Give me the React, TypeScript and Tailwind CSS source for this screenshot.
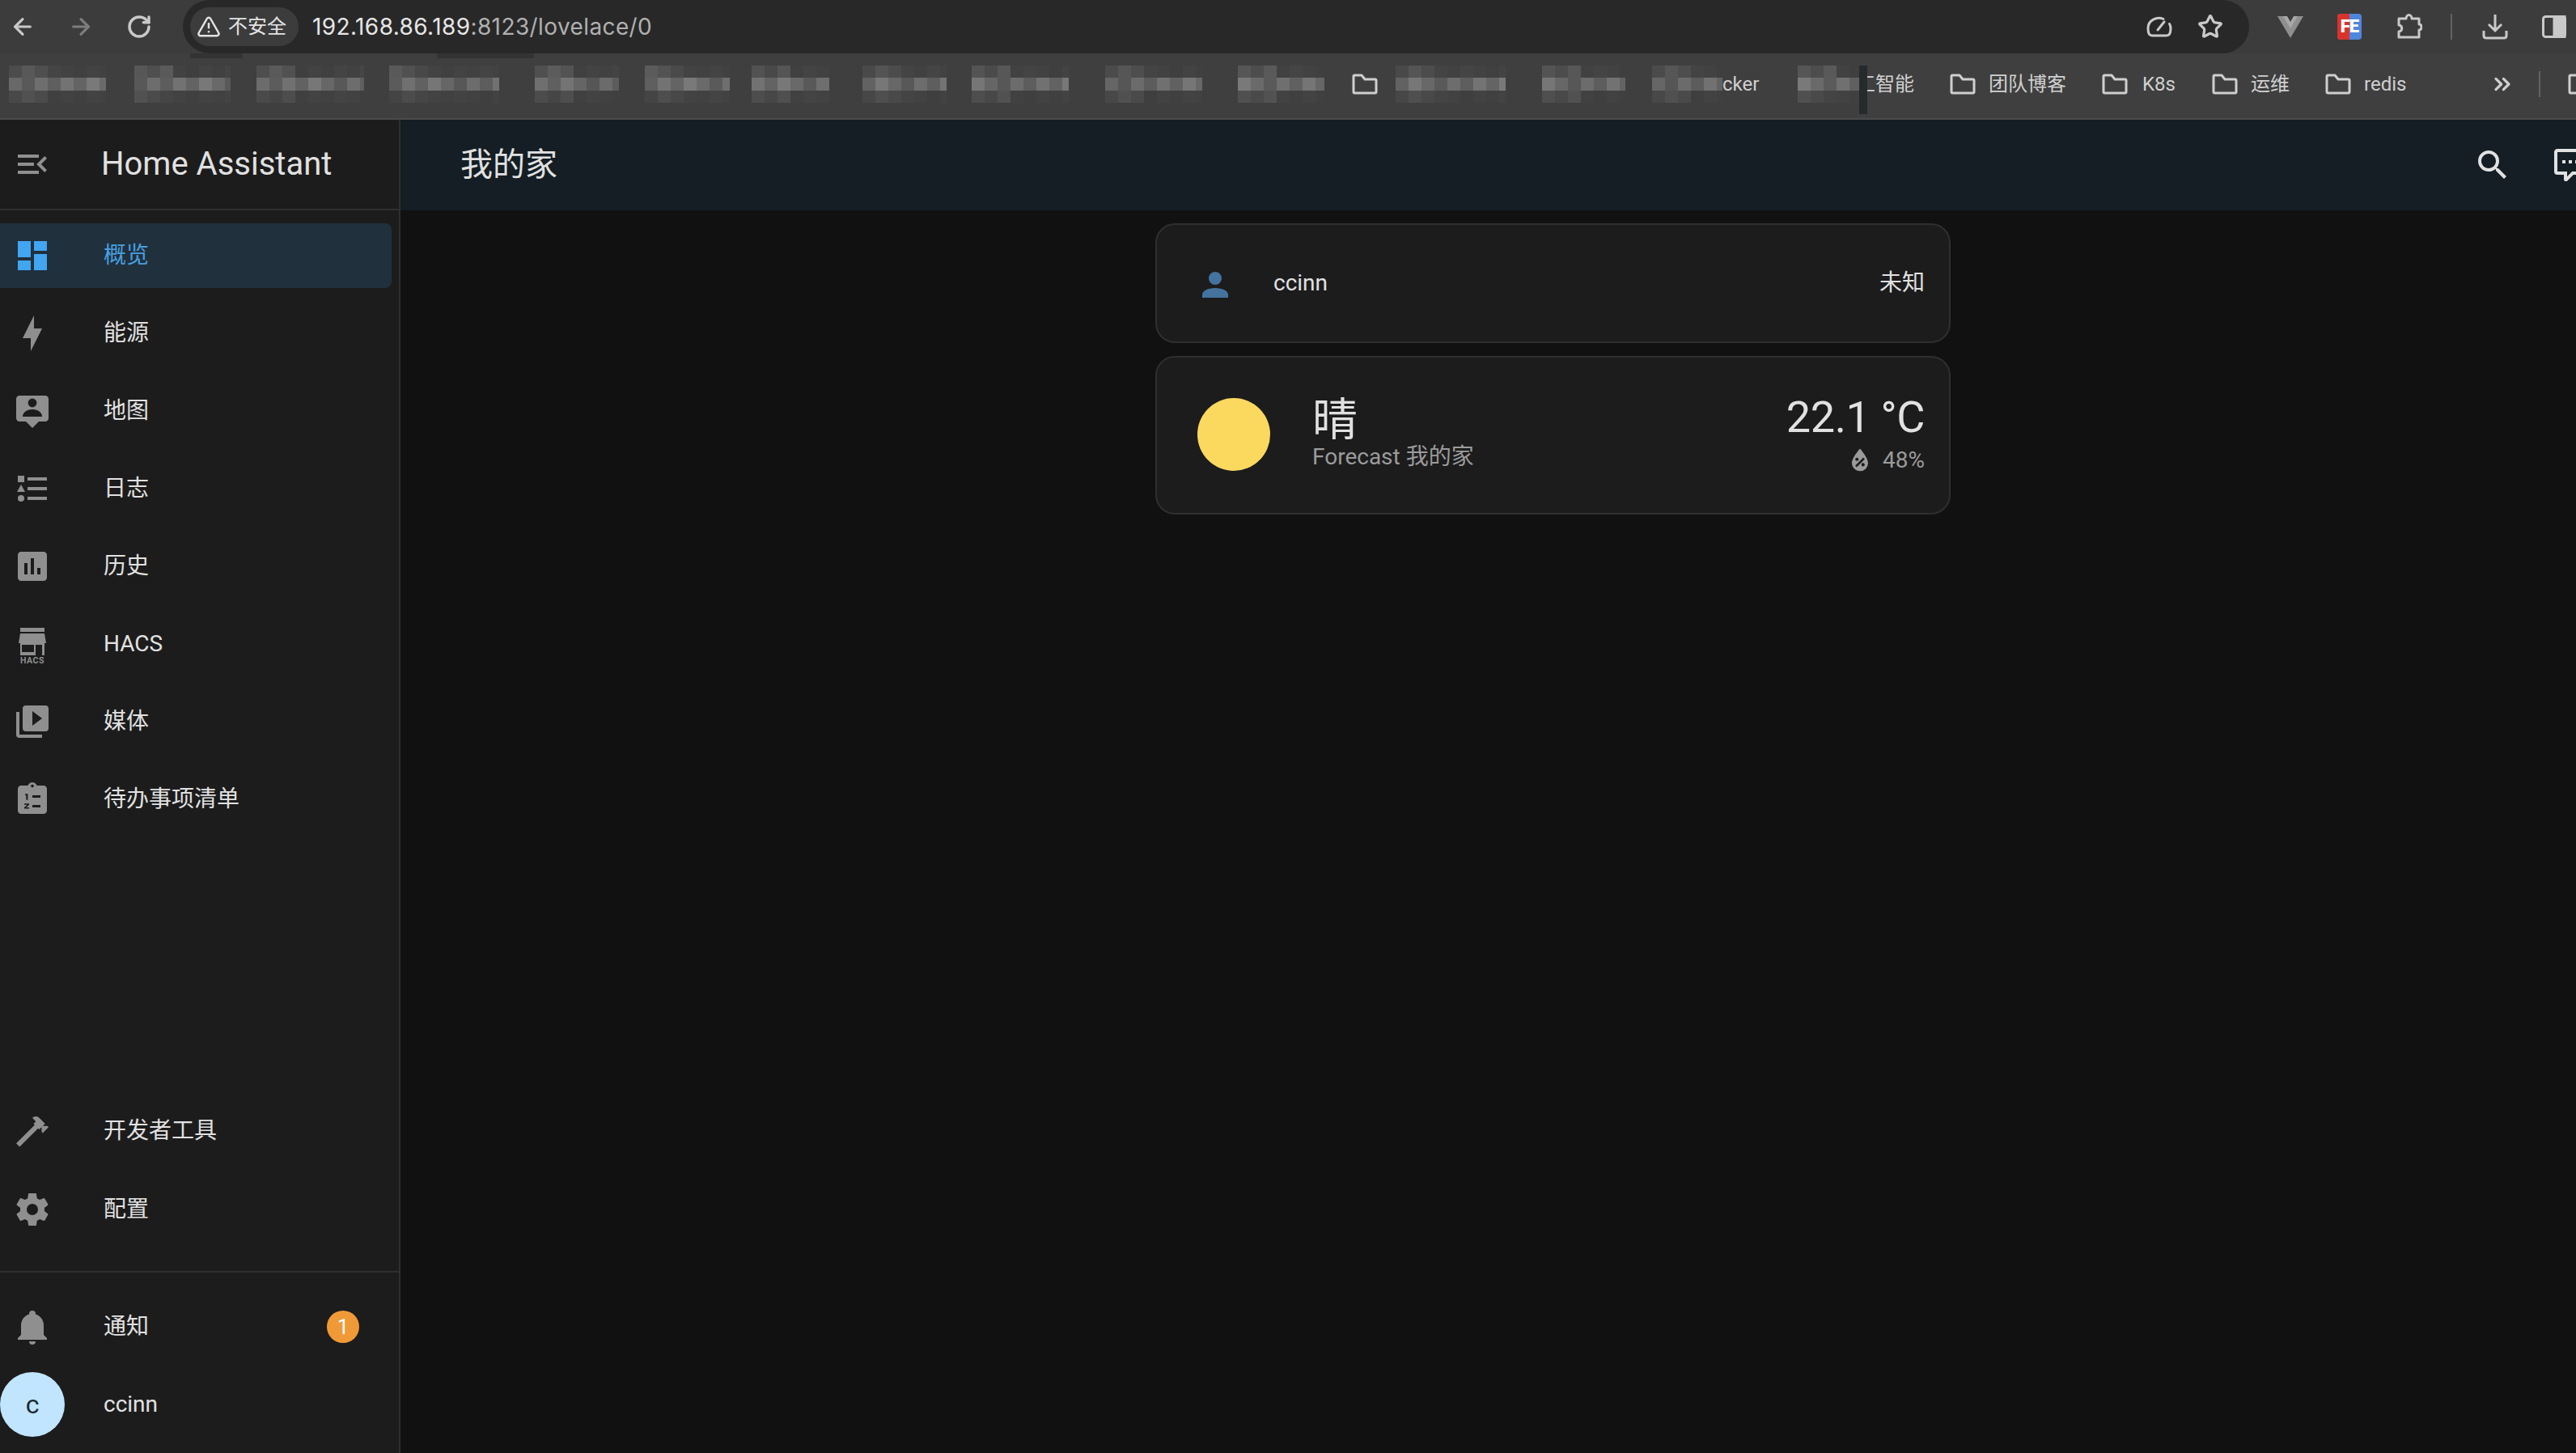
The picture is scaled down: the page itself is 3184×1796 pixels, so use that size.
import { ArrowLeft, ArrowRight, ChevronsRight, RotateCw, Star, TriangleAlert } from "lucide-react";

const paths = {
  menuOpen: "M21,15.61L19.59,17L14.58,12L19.59,7L21,8.39L17.44,12L21,15.61M3,6H16V8H3V6M3,13V11H13V13H3M3,18V16H16V18H3Z",
  dashboard: "M13,3V9H21V3M13,21H21V11H13M3,21H11V15H3M3,13H11V3H3V13Z",
  bolt: "M11 15H6L13 1V9H18L11 23V15Z",
  list: "M5,9.5L7.5,14H2.5L5,9.5M3,4H7V8H3V4M5,20A2,2 0 0,0 7,18A2,2 0 0,0 5,16A2,2 0 0,0 3,18A2,2 0 0,0 5,20M9,5V7H21V5H9M9,19H21V17H9V19M9,13H21V11H9V13Z",
  chart: "M19 3H5C3.9 3 3 3.9 3 5V19C3 20.1 3.9 21 5 21H19C20.1 21 21 20.1 21 19V5C21 3.9 20.1 3 19 3M9 17H7V10H9V17M13 17H11V7H13V17M17 17H15V13H17V17Z",
  play: "M4,6H2V20A2,2 0 0,0 4,22H18V20H4V6M20,2H8A2,2 0 0,0 6,4V16A2,2 0 0,0 8,18H20A2,2 0 0,0 22,16V4A2,2 0 0,0 20,2M12,14.5V5.5L18,10L12,14.5Z",
  hammer: "M2 19.63L13.43 8.2L12.72 7.5L14.14 6.07L12 3.89C13.2 2.7 15.09 2.7 16.27 3.89L19.87 7.5L18.45 8.91H21.29L22 9.62L18.45 13.21L17.74 12.5V9.62L16.27 11.04L15.56 10.33L4.13 21.76L2 19.63Z",
  cog: "M12,15.5A3.5,3.5 0 0,1 8.5,12A3.5,3.5 0 0,1 12,8.5A3.5,3.5 0 0,1 15.5,12A3.5,3.5 0 0,1 12,15.5M19.43,12.97C19.47,12.65 19.5,12.33 19.5,12C19.5,11.67 19.47,11.34 19.43,11L21.54,9.37C21.73,9.22 21.78,8.95 21.66,8.73L19.66,5.27C19.54,5.05 19.27,4.96 19.05,5.05L16.56,6.05C16.04,5.66 15.5,5.32 14.87,5.07L14.5,2.42C14.46,2.18 14.25,2 14,2H10C9.75,2 9.54,2.18 9.5,2.42L9.13,5.07C8.5,5.32 7.96,5.66 7.44,6.05L4.95,5.05C4.73,4.96 4.46,5.05 4.34,5.27L2.34,8.73C2.21,8.95 2.27,9.22 2.46,9.37L4.57,11C4.53,11.34 4.5,11.67 4.5,12C4.5,12.33 4.53,12.65 4.57,12.97L2.46,14.63C2.27,14.78 2.21,15.05 2.34,15.27L4.34,18.73C4.46,18.95 4.73,19.03 4.95,18.95L7.44,17.94C7.96,18.34 8.5,18.68 9.13,18.93L9.5,21.58C9.54,21.82 9.75,22 10,22H14C14.25,22 14.46,21.82 14.5,21.58L14.87,18.93C15.5,18.67 16.04,18.34 16.56,17.94L19.05,18.95C19.27,19.03 19.54,18.95 19.66,18.73L21.66,15.27C21.78,15.05 21.73,14.78 21.54,14.63L19.43,12.97Z",
  bell: "M21,19V20H3V19L5,17V11C5,7.9 7.03,5.17 10,4.29C10,4.19 10,4.1 10,4A2,2 0 0,1 12,2A2,2 0 0,1 14,4C14,4.1 14,4.19 14,4.29C16.97,5.17 19,7.9 19,11V17L21,19M14,21A2,2 0 0,1 12,23A2,2 0 0,1 10,21",
  magnify: "M9.5,3A6.5,6.5 0 0,1 16,9.5C16,11.11 15.41,12.59 14.44,13.73L14.71,14H15.5L20.5,19L19,20.5L14,15.5V14.71L13.73,14.44C12.59,15.41 11.11,16 9.5,16A6.5,6.5 0 0,1 3,9.5A6.5,6.5 0 0,1 9.5,3M9.5,5C7,5 5,7 5,9.5C5,12 7,14 9.5,14C12,14 14,12 14,9.5C14,7 12,5 9.5,5Z",
  comment: "M9,22A1,1 0 0,1 8,21V18H4A2,2 0 0,1 2,16V4C2,2.89 2.9,2 4,2H20A2,2 0 0,1 22,4V16A2,2 0 0,1 20,18H13.9L10.2,21.71C10,21.9 9.75,22 9.5,22V22H9M10,16V19.08L13.08,16H20V4H4V16H10M17,11H15V9H17V11M13,11H11V9H13V11M9,11H7V9H9V11Z",
  account: "M12,4A4,4 0 0,1 16,8A4,4 0 0,1 12,12A4,4 0 0,1 8,8A4,4 0 0,1 12,4M12,14C16.42,14 20,15.79 20,18V20H4V18C4,15.79 7.58,14 12,14Z",
  water: "M12,3.25C12,3.25 6,10 6,14C6,17.32 8.69,20 12,20A6,6 0 0,0 18,14C18,10 12,3.25 12,3.25M14.47,9.97L15.53,11.03L9.53,17.03L8.47,15.97M9.75,10A1.25,1.25 0 0,1 11,11.25A1.25,1.25 0 0,1 9.75,12.5A1.25,1.25 0 0,1 8.5,11.25A1.25,1.25 0 0,1 9.75,10M14.25,14A1.25,1.25 0 0,1 15.5,15.25A1.25,1.25 0 0,1 14.25,16.5A1.25,1.25 0 0,1 13,15.25A1.25,1.25 0 0,1 14.25,14Z",
};

function Mdi({ d, className }: { d: string; className?: string }) {
  return (
    <svg viewBox="0 0 24 24" className={className} fill="currentColor">
      <path d={d} fillRule="evenodd" />
    </svg>
  );
}

function MapIcon() {
  return (
    <svg viewBox="0 0 24 24" className="h-12 w-12 shrink-0 text-[#8f8f8f]" fill="currentColor">
      <path d="M4 2.5H20C21.1 2.5 22 3.4 22 4.5V16.5C22 17.6 21.1 18.5 20 18.5H16L12 22.5L8 18.5H4C2.9 18.5 2 17.6 2 16.5V4.5C2 3.4 2.9 2.5 4 2.5Z" />
      <circle cx="12" cy="7" r="2.7" fill="#1c1c1c" />
      <path d="M6 15.5C6 12.6 9 11 12 11S18 12.6 18 15.5Z" fill="#1c1c1c" />
    </svg>
  );
}

function HacsIcon() {
  return (
    <svg viewBox="0 0 48 48" className="h-12 w-12 shrink-0 overflow-visible text-[#8f8f8f]" fill="currentColor">
      <rect x="9" y="4" width="30" height="5" />
      <path d="M9 11H39L41 23H7Z" />
      <rect x="9" y="23" width="30" height="15" />
      <rect x="11" y="25" width="15" height="9" fill="#1c1c1c" />
      <rect x="28" y="25" width="8" height="13" fill="#1c1c1c" />
      <text x="24" y="47.5" textAnchor="middle" fontSize="10.5" fontWeight="700" letterSpacing="0.5" fontFamily="Roboto">HACS</text>
    </svg>
  );
}

function TodoIcon() {
  return (
    <svg viewBox="0 0 24 24" className="h-12 w-12 shrink-0 text-[#8f8f8f]" fill="currentColor">
      <path d="M19 3.5H14.8C14.4 2.4 13.3 1.5 12 1.5S9.6 2.4 9.2 3.5H5C3.9 3.5 3 4.4 3 5.5V19C3 20.1 3.9 21 5 21H19C20.1 21 21 20.1 21 19V5.5C21 4.4 20.1 3.5 19 3.5Z" />
      <circle cx="12" cy="3.8" r="0.9" fill="#1c1c1c" />
      <rect x="12" y="9.5" width="5" height="1.5" fill="#1c1c1c" />
      <rect x="12" y="15.5" width="5" height="1.5" fill="#1c1c1c" />
      <path d="M7.6 8.6H9.2V12.4H8.2V9.6H7.6Z" fill="#1c1c1c" />
      <path d="M7 14.6H10V15.4L8.2 17H10V17.8H7V17L8.8 15.4H7Z" fill="#1c1c1c" />
    </svg>
  );
}

function FolderIcon() {
  return (
    <svg viewBox="0 0 32 26" className="h-[26px] w-8 shrink-0" fill="none" stroke="#cfcfcf" strokeWidth="3" strokeLinejoin="round">
      <path d="M2 3.5C2 2.5 2.5 2 3.5 2H12L16 7H28.5C29.5 7 30 7.5 30 8.5V22.5C30 23.5 29.5 24 28.5 24H3.5C2.5 24 2 23.5 2 22.5Z" />
    </svg>
  );
}

// pixelated bookmark titles, same colours on every render
function Mosaic({ width, seed, className }: { width: number; seed: number; className?: string }) {
  const cols = Math.ceil(width / 16);
  const tone = (n: number, lo: number, range: number) => {
    const v = lo + (((n * 37 + seed * 61) * 2654435761) % 97) / 97 * range;
    const c = Math.round(v);
    return `rgb(${c},${c},${c})`;
  };
  return (
    <div className={`flex h-[46px] shrink-0 overflow-hidden ${className ?? ""}`} style={{ width }}>
      {Array.from({ length: cols }).map((_, i) => (
        <div key={i} className="flex w-4 shrink-0 flex-col">
          <div className="h-[15px]" style={{ background: i < 3 ? tone(i + 1, 72, 20) : tone(i + 1, 63, 6) }} />
          <div className="h-4" style={{ background: tone(i + 50, 86, 36) }} />
          <div className="h-[15px]" style={{ background: i < 3 ? tone(i + 100, 68, 14) : tone(i + 100, 63, 5) }} />
        </div>
      ))}
    </div>
  );
}

const blurred = [
  [11, 120], [35, 119], [32, 133], [31, 136], [44, 104], [32, 105], [27, 96], [41, 104], [31, 120], [45, 120], [44, 107],
];

const topNav = [
  { label: "概览", icon: <Mdi d={paths.dashboard} className="h-12 w-12 shrink-0 text-[#42a5f0]" />, active: true },
  { label: "能源", icon: <Mdi d={paths.bolt} className="h-12 w-12 shrink-0 text-[#8f8f8f]" /> },
  { label: "地图", icon: <MapIcon /> },
  { label: "日志", icon: <Mdi d={paths.list} className="h-12 w-12 shrink-0 text-[#8f8f8f]" /> },
  { label: "历史", icon: <Mdi d={paths.chart} className="h-12 w-12 shrink-0 text-[#8f8f8f]" /> },
  { label: "HACS", icon: <HacsIcon /> },
  { label: "媒体", icon: <Mdi d={paths.play} className="h-12 w-12 shrink-0 text-[#8f8f8f]" /> },
  { label: "待办事项清单", icon: <TodoIcon /> },
];

function NavRow({ label, icon, active }: { label: string; icon: React.ReactNode; active?: boolean }) {
  return (
    <div className={`flex h-20 w-[484px] items-center gap-[64px] rounded-r-lg pl-4 ${active ? "bg-[#20303d] text-[#48a0e0]" : "text-[#e1e1e1]"}`}>
      {icon}
      <span className="text-[28px] leading-10">{label}</span>
    </div>
  );
}

export default function App() {
  return (
    <div className="flex h-[1796px] w-[3184px] flex-col overflow-hidden bg-[#111111] font-['Roboto','Noto_Sans_CJK_SC',sans-serif]">
      {/* BROWSER TOOLBAR */}
      <div className="relative flex h-[66px] items-center bg-[#3c3c3c] text-[#c9c9c9]">
        <ArrowLeft className="ml-[12px] h-8 w-8" strokeWidth={2.4} />
        <ArrowRight className="ml-10 h-8 w-8 text-[#7d7d7d]" strokeWidth={2.4} />
        <RotateCw className="ml-10 h-8 w-8" strokeWidth={2.6} />
        <div className="ml-[38px] flex h-[66px] w-[2554px] items-center rounded-[33px] bg-[#282828] pl-[9px] font-['Inter','Noto_Sans_CJK_SC',sans-serif]">
          <div className="flex h-12 w-[134px] items-center gap-[9px] rounded-3xl bg-[#3c3c3c] pl-2 text-[24px] text-[#e3e3e3]">
            <TriangleAlert className="h-[30px] w-[30px]" strokeWidth={2} />
            <span className="leading-none">不安全</span>
          </div>
          <span className="ml-[17px] text-[28px] leading-none tracking-[0.4px] text-[#e6e6e6]">
            192.168.86.189<span className="text-[#b0b0b0]">:8123/lovelace/0</span>
          </span>
          <div className="ml-auto mr-8 flex items-center gap-[31px]">
            <svg viewBox="0 0 32 26" className="h-[26px] w-8" fill="none" stroke="#c9c9c9" strokeWidth="3" strokeLinecap="round">
              <path d="M21 3.5C13 0 2 5 2 15C2 18 2 24 7 24H25C30 24 30 18 30 15C30 13 29.5 11 28.5 9.5" />
              <path d="M14 17L22 7" />
            </svg>
            <Star className="h-8 w-8" strokeWidth={2.4} />
          </div>
        </div>
        <svg viewBox="0 0 32 28" className="ml-[35px] h-7 w-8">
          <path d="M0 1H32L16 28Z" fill="#8f8f8f" />
          <path d="M7 1H25L16 16Z" fill="#a8a8a8" />
          <path d="M12 1H20L16 8Z" fill="#3c3c3c" />
        </svg>
        <div className="relative ml-[42px] flex h-8 w-[30px] items-center justify-center overflow-hidden rounded-sm bg-[#4f86dd]">
          <div className="absolute inset-y-0 left-0 w-[15px] bg-[#d9342b]" />
          <span className="relative text-[22px] font-black leading-none tracking-[-1px] text-white">FE</span>
        </div>
        <svg viewBox="0 0 32 32" className="ml-[43px] h-8 w-8" fill="none" stroke="#c9c9c9" strokeWidth="3" strokeLinejoin="round">
          <path d="M3 6H12C12 0 19 0 19 6H28V13C32 13 32 20 28 20V29H3V22C8 22 8 14 3 14Z" />
        </svg>
        <div className="ml-[35px] h-8 w-0.5 bg-[#626262]" />
        <svg viewBox="0 0 32 32" className="ml-[37px] h-8 w-8" fill="none" stroke="#c9c9c9" strokeWidth="3">
          <path d="M16 1V20M8 13L16 21L24 13" />
          <path d="M2 21V27C2 29 3 30 5 30H27C29 30 30 29 30 27V21" />
        </svg>
        <svg viewBox="0 0 30 28" className="ml-[42px] h-7 w-[30px]" fill="none" stroke="#c9c9c9" strokeWidth="3">
          <rect x="1.5" y="1.5" width="27" height="25" rx="3" />
          <rect x="15" y="1.5" width="13" height="25" fill="#c9c9c9" />
        </svg>
        <div className="absolute left-[235px] top-[66px] h-1.5 w-[65px] bg-[#333333]" />
        <div className="absolute left-[540px] top-[66px] h-1.5 w-[120px] bg-[#333333]" />
      </div>

      {/* BOOKMARKS */}
      <div className="flex h-[82px] items-center overflow-hidden whitespace-nowrap border-b-2 border-[#4b4b4b] bg-[#3f3f3f] pb-1 text-[24px] text-[#d0d0d0]">
        {blurred.map(([gap, w], i) => (
          <div key={i} className="shrink-0" style={{ marginLeft: gap }}>
            <Mosaic width={w} seed={i + 3} />
          </div>
        ))}
        <div className="ml-[34px]"><FolderIcon /></div>
        <Mosaic width={136} seed={21} className="ml-[22px]" />
        <Mosaic width={103} seed={22} className="ml-[45px]" />
        <Mosaic width={87} seed={23} className="shrink-0 ml-[33px]" />
        <span className="w-[47px] shrink-0 text-[#d0d0d0]">cker</span>
        <div className="relative z-10 ml-[46px] shrink-0">
          <Mosaic width={86} seed={24} />
          <div className="absolute -bottom-[14px] right-0 top-0 w-[10px] bg-[#252a2d]" />
        </div>
        <span className="ml-[-14px] shrink-0">工智能</span>
        <div className="ml-[44px]"><FolderIcon /></div>
        <span className="ml-4 shrink-0">团队博客</span>
        <div className="ml-[44px]"><FolderIcon /></div>
        <span className="ml-[18px] w-[41px] shrink-0">K8s</span>
        <div className="ml-[45px]"><FolderIcon /></div>
        <span className="ml-4 w-[48px] shrink-0">运维</span>
        <div className="ml-[44px]"><FolderIcon /></div>
        <span className="ml-4 w-[55px] shrink-0">redis</span>
        <ChevronsRight className="ml-[100px] h-8 w-8 shrink-0" strokeWidth={2.4} />
        <div className="ml-[29px] h-8 w-0.5 shrink-0 bg-[#626262]" />
        <div className="ml-[34px]"><FolderIcon /></div>
      </div>

      <div className="flex min-h-0 flex-1">
        {/* SIDEBAR */}
        <aside className="flex w-[495px] shrink-0 flex-col border-r-2 border-[#2f2f2f] bg-[#1c1c1c]">
          <div className="flex h-[112px] shrink-0 items-center gap-[61px] border-b-2 border-[#2f2f2f] pl-4 pr-2">
            <Mdi d={paths.menuOpen} className="h-12 w-12 shrink-0 text-[#8f8f8f]" />
            <span className="text-[40px] leading-none text-[#e1e1e1]">Home Assistant</span>
          </div>
          <nav className="mt-4 flex flex-col gap-4">
            {topNav.map((item) => (
              <NavRow key={item.label} {...item} />
            ))}
          </nav>
          <div className="flex-1" />
          <div className="flex flex-col gap-[17px] pb-9">
            <NavRow label="开发者工具" icon={<Mdi d={paths.hammer} className="h-12 w-12 shrink-0 text-[#8f8f8f]" />} />
            <NavRow label="配置" icon={<Mdi d={paths.cog} className="h-12 w-12 shrink-0 text-[#8f8f8f]" />} />
          </div>
          <div className="flex flex-col gap-4 border-t-2 border-[#2f2f2f] pb-5 pt-[27px]">
            <div className="relative">
              <NavRow label="通知" icon={<Mdi d={paths.bell} className="h-12 w-12 shrink-0 text-[#8f8f8f]" />} />
              <div className="absolute left-[404px] top-5 flex h-10 w-10 items-center justify-center rounded-full bg-[#f09a37] text-[26px] leading-none text-white">1</div>
            </div>
            <div className="flex h-20 items-center gap-[48px]">
              <div className="flex h-20 w-20 items-center justify-center rounded-full bg-[#c1e5fe] text-[32px] text-[#1c2a33]">c</div>
              <span className="text-[28px] text-[#e1e1e1]">ccinn</span>
            </div>
          </div>
        </aside>

        {/* MAIN */}
        <main className="flex min-w-0 flex-1 flex-col">
          <header className="flex h-[112px] shrink-0 items-center bg-[#141e24] pl-[74px]">
            <span className="flex-1 text-[40px] leading-none text-[#e1e1e1]">我的家</span>
            <div className="-mr-[41px] flex shrink-0 text-[#e1e1e1]">
              <div className="flex h-24 w-24 items-center justify-center"><Mdi d={paths.magnify} className="h-12 w-12" /></div>
              <div className="flex h-24 w-24 items-center justify-center"><Mdi d={paths.comment} className="h-12 w-12" /></div>
            </div>
          </header>

          <div className="ml-[933px] flex w-[983px] flex-col gap-4 pt-4">
            <div className="flex h-[148px] items-center rounded-3xl border-2 border-[#2f2f2f] bg-[#1c1c1c] pl-[48px] pr-[30px] text-[28px]">
              <Mdi d={paths.account} className="mt-1 h-12 w-12 shrink-0 text-[#44739e]" />
              <span className="ml-12 flex-1 text-[#e1e1e1]">ccinn</span>
              <span className="text-[#e1e1e1]">未知</span>
            </div>

            <div className="flex h-[196px] items-center rounded-3xl border-2 border-[#2f2f2f] bg-[#1c1c1c] pl-[50px] pr-[30px]">
              <div className="-mt-0.5 h-[90px] w-[90px] shrink-0 rounded-full bg-[#fbd95f]" />
              <div className="ml-[52px] -mt-0.5 flex flex-1 flex-col">
                <span className="text-[56px] leading-[56px] text-[#e1e1e1]">晴</span>
                <span className="text-[28px] leading-9 text-[#9b9b9b]">Forecast 我的家</span>
              </div>
              <div className="flex flex-col items-end">
                <span className="text-[54px] leading-[56px] tracking-[-0.4px] text-[#e1e1e1]">22.1 °C</span>
                <div className="mt-[5px] flex h-10 items-center gap-[18px] text-[28px] text-[#9b9b9b]">
                  <Mdi d={paths.water} className="-mr-[10px] h-10 w-10" />
                  <span>48%</span>
                </div>
              </div>
            </div>
          </div>
        </main>
      </div>
    </div>
  );
}
